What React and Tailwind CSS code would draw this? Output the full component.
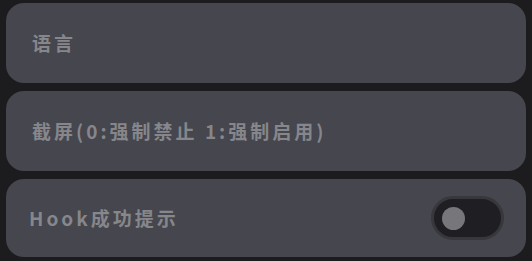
import React from "react";

const font = { fontFamily: '"Noto Sans CJK SC", "Noto Sans", sans-serif' };

function Row({ children, right }) {
  return (
    <div className="flex h-[80px] shrink-0 items-center justify-between rounded-[18px] bg-[#45464e] pl-[26px] pr-[22px]">
      <span className="text-[19px] font-bold tracking-[3px] text-[#86868b]" style={font}>
        {children}
      </span>
      {right}
    </div>
  );
}

export default function App() {
  return (
    <div className="flex h-[261px] w-[532px] flex-col gap-[8px] overflow-hidden bg-[#1c1c1f] px-[6px] pt-[3px]">
      <Row>语言</Row>
      <Row>截屏(0:强制禁止 1:强制启用)</Row>
      <div className="flex h-[78px] shrink-0 items-center justify-between rounded-[18px] bg-[#45464e] pl-[23px] pr-[22px]">
        <span className="text-[19px] font-bold tracking-[3px] text-[#86868b]" style={font}>
          Hook成功提示
        </span>
        <div className="flex h-[44px] w-[73px] items-center rounded-full border-[3px] border-[#37373c] bg-[#1f1f23] pl-[8px]">
          <div className="h-[23px] w-[23px] rounded-full bg-[#77767b]" />
        </div>
      </div>
    </div>
  );
}
